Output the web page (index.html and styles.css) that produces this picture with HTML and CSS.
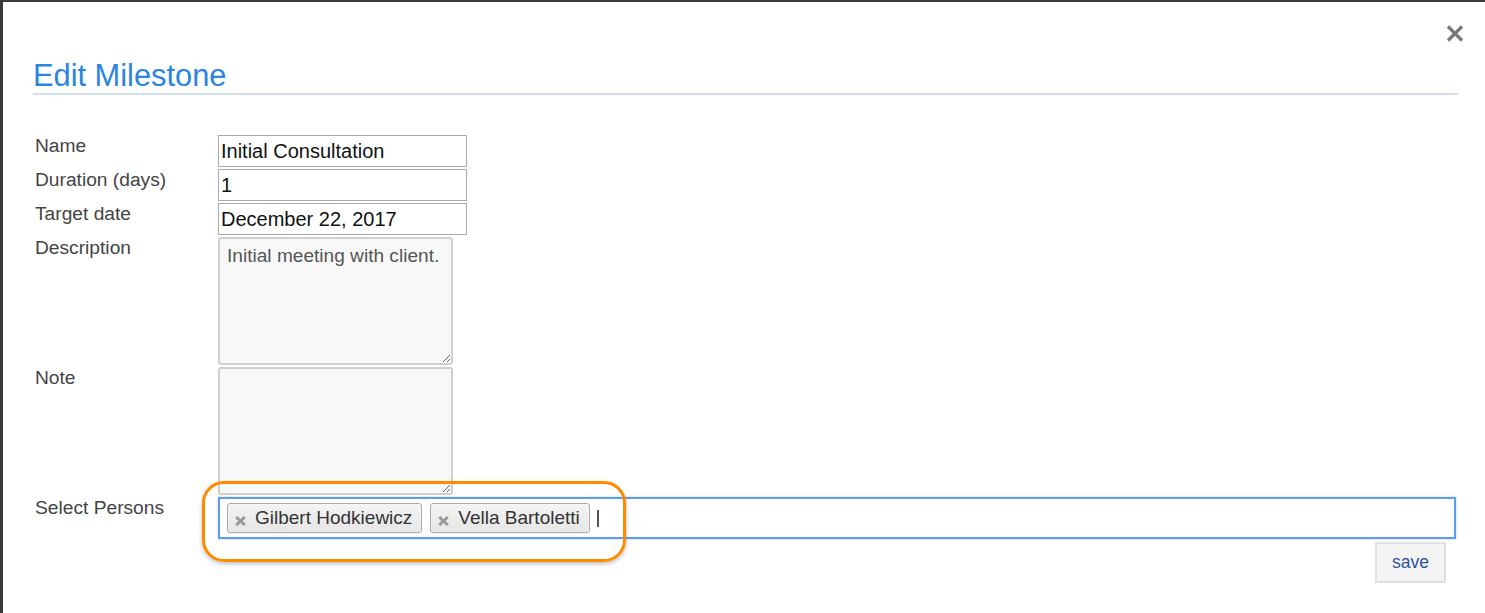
FILE: index.html
```html
<!DOCTYPE html>
<html lang="en">
<head>
<meta charset="utf-8">
<title>Edit Milestone</title>
<link rel="stylesheet" href="styles.css">
</head>
<body>
<div class="modal">
  <div class="modal-top">
    <button class="close" aria-label="Close">
      <svg width="18" height="17" viewBox="0 0 18 17"><path d="M2 1.5 L16 15.5 M16 1.5 L2 15.5" stroke="#777" stroke-width="3.2" stroke-linecap="butt" fill="none"/></svg>
    </button>
  </div>
  <h2 class="modal-title">Edit Milestone</h2>
  <form class="form">
    <label class="lbl">Name</label>
    <div class="field"><input class="txt" type="text" value="Initial Consultation"></div>
    <label class="lbl">Duration (days)</label>
    <div class="field"><input class="txt" type="text" value="1"></div>
    <label class="lbl">Target date</label>
    <div class="field"><input class="txt" type="text" value="December 22, 2017"></div>
    <label class="lbl">Description</label>
    <div class="field"><textarea class="area">Initial meeting with client.</textarea></div>
    <label class="lbl">Note</label>
    <div class="field"><textarea class="area"></textarea></div>
    <label class="lbl">Select Persons</label>
    <div class="field select-wrap">
      <div class="multi">
        <span class="tag"><svg class="tag-x" width="11" height="10" viewBox="0 0 11 10"><path d="M1.2 1 L9.8 9 M9.8 1 L1.2 9" stroke="#9a9a9a" stroke-width="3" fill="none"/></svg><span class="tag-text">Gilbert Hodkiewicz</span></span>
        <span class="tag"><svg class="tag-x" width="11" height="10" viewBox="0 0 11 10"><path d="M1.2 1 L9.8 9 M9.8 1 L1.2 9" stroke="#9a9a9a" stroke-width="3" fill="none"/></svg><span class="tag-text">Vella Bartoletti</span></span>
        <span class="caret"></span>
      </div>
      <span class="highlight"></span>
    </div>
  </form>
  <div class="actions">
    <button class="save" type="button">save</button>
  </div>
</div>
</body>
</html>
```
FILE: styles.css
```css
html, body {
  margin: 0;
  padding: 0;
}
body {
  background: #3a3a3a;
  font-family: "Liberation Sans", Arial, sans-serif;
  height: 613px;
  overflow: hidden;
}
.modal {
  background: #fff;
  margin: 2px 0 0 3px;
  padding: 0 27px 40px 30px;
  height: 611px;
  box-sizing: border-box;
}
.modal-top {
  display: flex;
  justify-content: flex-end;
  padding-top: 23px;
  margin-right: -6px;
}
.close {
  border: 0;
  background: none;
  padding: 0;
  width: 18px;
  height: 17px;
  display: block;
  cursor: pointer;
}
.close svg { display: block; }
.modal-title {
  margin: 16px 0 0;
  font-weight: normal;
  font-size: 30.8px;
  line-height: 35px;
  color: #2a84e0;
  border-bottom: 2px solid #d3dfe9;
  padding-left: 0;
}
.form {
  display: grid;
  grid-template-columns: 185px 1fr;
  row-gap: 2px;
  margin-top: 40px;
}
.lbl {
  font-size: 19.2px;
  color: #444;
  padding-left: 2px;
  align-self: start;
}
.field { display: block; }
.txt {
  display: block;
  box-sizing: border-box;
  width: 249px;
  height: 32px;
  border: 1px solid #aaa;
  padding: 1px 2px;
  margin: 0;
  font-family: "Liberation Sans", Arial, sans-serif;
  font-size: 20px;
  color: #111;
  background: #fff;
}
.area {
  display: block;
  box-sizing: border-box;
  width: 235px;
  height: 128px;
  margin: 0;
  border: 2px solid #cfcfcf;
  border-radius: 3px;
  background: #f8f8f8;
  padding: 6px 7px;
  font-family: "Liberation Sans", Arial, sans-serif;
  font-size: 19.1px;
  color: #555;
}
.select-wrap { position: relative; }
.multi {
  box-sizing: border-box;
  height: 42px;
  margin-right: 2px;
  border: 2px solid #5c9df0;
  box-shadow: 0 0 2px rgba(92, 157, 240, 0.5);
  padding: 0 7px;
  display: flex;
  align-items: center;
  gap: 8px;
  background: #fff;
}
.tag {
  box-sizing: border-box;
  height: 30px;
  display: inline-flex;
  align-items: center;
  padding: 0 9px 0 7px;
  border: 1px solid #aaa;
  border-radius: 3px;
  background: linear-gradient(#f4f4f4, #e6e6e6);
  box-shadow: 0 0 2px #fff inset, 0 1px 0 rgba(0,0,0,0.05);
  font-size: 19px;
  color: #333;
}
.tag-x {
  display: block;
  flex-shrink: 0;
  width: 11px;
  height: 10px;
  margin: 5px 9px 0 0;
}
.caret {
  width: 2px;
  height: 17px;
  background: #555;
  margin-top: 1px;
  margin-left: -1px;
}
.highlight {
  position: absolute;
  left: -16px;
  top: -16px;
  width: 424px;
  height: 81px;
  box-sizing: border-box;
  border: 3px solid #ff8a00;
  border-radius: 22px;
  box-shadow: 0 2px 4px rgba(0,0,0,0.25);
  pointer-events: none;
}
.actions {
  display: flex;
  justify-content: flex-end;
  padding-right: 12px;
  margin-top: 3px;
}
.save {
  box-sizing: border-box;
  width: 71px;
  height: 41px;
  border: 2px solid #e0e0e0;
  background: #f4f4f4;
  color: #2f54a3;
  font-family: "Liberation Sans", Arial, sans-serif;
  font-size: 17.5px;
  padding: 0;
  cursor: pointer;
}
```
